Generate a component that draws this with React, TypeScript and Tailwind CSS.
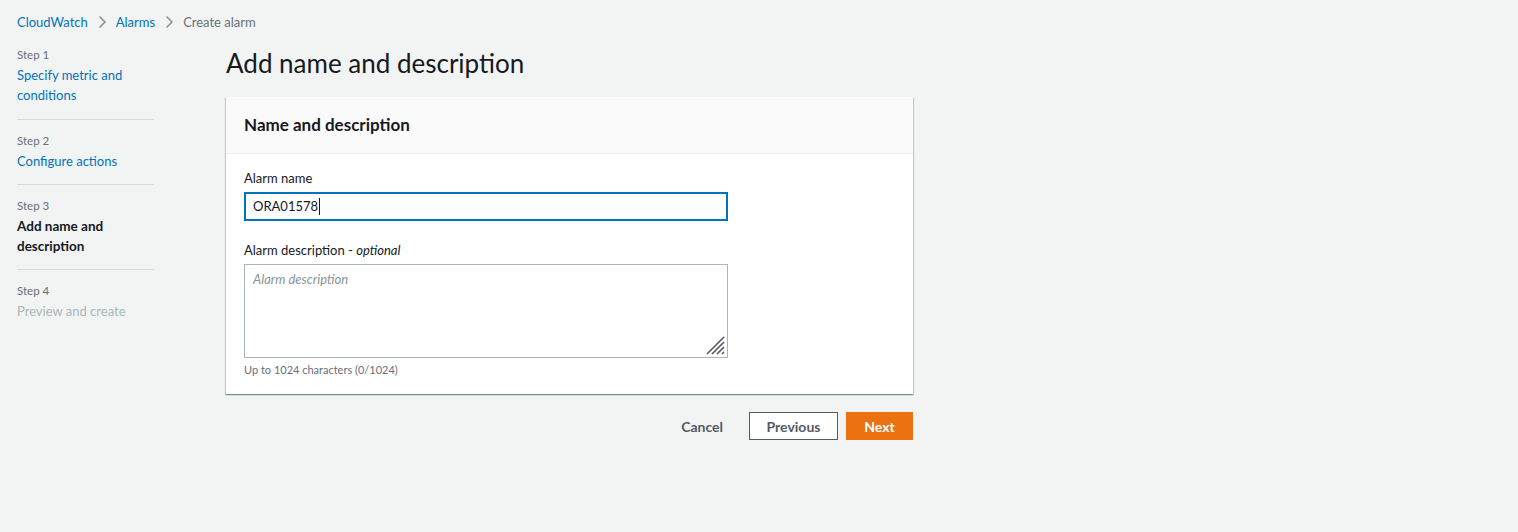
import React from "react";

function Chevron() {
  return (
    <svg width="16" height="16" viewBox="0 0 16 16" className="mx-[6px]" fill="none">
      <path d="M5.5 2.5 L11 8 L5.5 13.5" stroke="#879596" strokeWidth="1.6" />
    </svg>
  );
}

function Step({ n, children, first }: { n: number; children: React.ReactNode; first?: boolean }) {
  return (
    <div className={`${first ? "pb-[14px]" : "border-t border-[#d5dbdb] pb-[13px]"} pt-[13px]`}>
      <div className="text-[11.5px] leading-[16px] text-[#687078]">Step {n}</div>
      <div className="mt-[2px] text-[13px] leading-[20px]">{children}</div>
    </div>
  );
}

export default function App() {
  return (
    <div
      className="min-h-[532px] w-full bg-[#f2f3f3] text-[#16191f]"
      style={{ fontFamily: "Lato, 'Open Sans', sans-serif" }}
    >
      <div className="flex items-center pl-[17px] pt-[12px] text-[13px] leading-[20px]">
        <span className="text-[#0073bb]">CloudWatch</span>
        <Chevron />
        <span className="text-[#0073bb]">Alarms</span>
        <Chevron />
        <span className="text-[#687078]">Create alarm</span>
      </div>

      <div className="flex pl-[17px] pt-[2px]">
        <div className="w-[137px] shrink-0">
          <Step n={1} first>
            <span className="text-[#0073bb]">Specify metric and conditions</span>
          </Step>
          <Step n={2}>
            <span className="text-[#0073bb]">Configure actions</span>
          </Step>
          <Step n={3}>
            <span className="text-[13.5px] font-bold text-[#16191f]">Add name and description</span>
          </Step>
          <Step n={4}>
            <span className="text-[#aab7b8]">Preview and create</span>
          </Step>
        </div>

        <div className="ml-[72px] w-[687px] shrink-0">
          <h1 className="pt-[11px] pb-[16px] text-[26px] font-normal leading-[36px] text-[#16191f]">
            Add name and description
          </h1>

          <div className="bg-white shadow-[0_1px_1px_0_rgba(0,28,36,0.3),1px_1px_1px_0_rgba(0,28,36,0.15),-1px_1px_1px_0_rgba(0,28,36,0.15)]">
            <div className="flex h-[57px] items-center border-b border-[#eaeded] bg-[#fafafa] px-[18px]">
              <h2 className="text-[17px] font-bold leading-[20px]">Name and description</h2>
            </div>
            <div className="px-[18px] pt-[14px] pb-[16px]">
              <div className="text-[13px] leading-[20px]">Alarm name</div>
              <div className="mt-[4px] flex h-[29px] w-[484px] items-center border-2 border-[#0073bb] bg-white px-[7px] text-[13px]">
                <span>ORA01578</span>
                <span className="ml-[1px] inline-block h-[17px] w-px bg-[#16191f]" />
              </div>

              <div className="mt-[19px] text-[13px] leading-[20px]">
                Alarm description - <i>optional</i>
              </div>
              <div className="relative mt-[4px] h-[94px] w-[484px] border border-[#aab7b8] bg-white px-[8px] pt-[4px] text-[13px] italic leading-[20px] text-[#879596]">
                Alarm description
                <svg
                  className="absolute bottom-[1px] right-[1px]"
                  width="22"
                  height="22"
                  viewBox="0 0 22 22"
                >
                  <path
                    d="M20 3 L3 20 M20 8 L8 20 M20 13 L13 20 M20 18 L18 20"
                    stroke="#545b64"
                    strokeWidth="1.6"
                  />
                </svg>
              </div>
              <div className="mt-[4px] text-[11px] leading-[16px] text-[#687078]">
                Up to 1024 characters (0/1024)
              </div>
            </div>
          </div>

          <div className="mt-[18px] flex items-center justify-end">
            <button className="mr-[6px] h-[28px] px-[20px] text-[14px] font-bold text-[#545b64]">Cancel</button>
            <button className="h-[28px] w-[89px] border border-[#545b64] bg-white text-[14px] font-bold text-[#545b64]">
              Previous
            </button>
            <button className="ml-[8px] h-[28px] w-[67px] bg-[#ec7211] text-[14px] font-bold text-white">Next</button>
          </div>
        </div>
      </div>
    </div>
  );
}
